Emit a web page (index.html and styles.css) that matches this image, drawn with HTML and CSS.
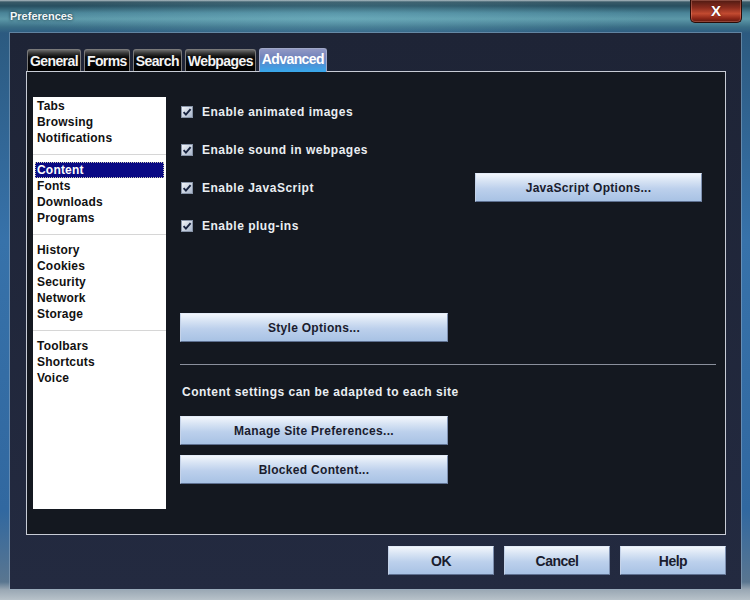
FILE: index.html
```html
<!DOCTYPE html>
<html>
<head>
<meta charset="utf-8">
<title>Preferences</title>
<link rel="stylesheet" href="styles.css">
</head>
<body>
<div class="window">
  <div class="titlebar">
    <span class="title">Preferences</span>
    <div class="close">X</div>
  </div>
  <div class="dialog">
    <div class="tabs">
      <div class="tab">General</div>
      <div class="tab">Forms</div>
      <div class="tab">Search</div>
      <div class="tab">Webpages</div>
      <div class="tab active">Advanced</div>
    </div>
    <div class="panel">
      <div class="nav">
        <div class="group">
          <div class="item">Tabs</div>
          <div class="item">Browsing</div>
          <div class="item">Notifications</div>
        </div>
        <div class="group">
          <div class="item selected">Content</div>
          <div class="item">Fonts</div>
          <div class="item">Downloads</div>
          <div class="item">Programs</div>
        </div>
        <div class="group">
          <div class="item">History</div>
          <div class="item">Cookies</div>
          <div class="item">Security</div>
          <div class="item">Network</div>
          <div class="item">Storage</div>
        </div>
        <div class="group">
          <div class="item">Toolbars</div>
          <div class="item">Shortcuts</div>
          <div class="item">Voice</div>
        </div>
      </div>
      <div class="content">
        <div class="checks">
          <label class="check"><svg class="box" width="12" height="12" viewBox="0 0 12 12"><defs><linearGradient id="cb" x1="0" y1="0" x2="1" y2="1"><stop offset="0" stop-color="#f6f8fc"/><stop offset="1" stop-color="#a4b2c8"/></linearGradient></defs><rect x="0.5" y="0.5" width="11" height="11" fill="url(#cb)" stroke="#8894a8"/><path d="M2.6 6.2 L4.9 8.6 L9.6 3.2" fill="none" stroke="#17223e" stroke-width="1.9"/></svg><span>Enable animated images</span></label>
          <label class="check"><svg class="box" width="12" height="12" viewBox="0 0 12 12"><rect x="0.5" y="0.5" width="11" height="11" fill="url(#cb)" stroke="#8894a8"/><path d="M2.6 6.2 L4.9 8.6 L9.6 3.2" fill="none" stroke="#17223e" stroke-width="1.9"/></svg><span>Enable sound in webpages</span></label>
          <div class="check-row">
            <label class="check"><svg class="box" width="12" height="12" viewBox="0 0 12 12"><rect x="0.5" y="0.5" width="11" height="11" fill="url(#cb)" stroke="#8894a8"/><path d="M2.6 6.2 L4.9 8.6 L9.6 3.2" fill="none" stroke="#17223e" stroke-width="1.9"/></svg><span>Enable JavaScript</span></label>
            <button class="btn js-btn">JavaScript Options...</button>
          </div>
          <label class="check"><svg class="box" width="12" height="12" viewBox="0 0 12 12"><rect x="0.5" y="0.5" width="11" height="11" fill="url(#cb)" stroke="#8894a8"/><path d="M2.6 6.2 L4.9 8.6 L9.6 3.2" fill="none" stroke="#17223e" stroke-width="1.9"/></svg><span>Enable plug-ins</span></label>
        </div>
        <button class="btn wide style-btn">Style Options...</button>
        <div class="rule"></div>
        <div class="note">Content settings can be adapted to each site</div>
        <button class="btn wide manage-btn">Manage Site Preferences...</button>
        <button class="btn wide blocked-btn">Blocked Content...</button>
      </div>
    </div>
    <div class="footer">
      <button class="btn dlg">OK</button>
      <button class="btn dlg">Cancel</button>
      <button class="btn dlg">Help</button>
    </div>
  </div>
</div>
</body>
</html>
```
FILE: styles.css
```css
* { box-sizing: border-box; }
html, body { margin: 0; padding: 0; }
body {
  width: 750px;
  height: 600px;
  overflow: hidden;
  font-family: "Liberation Sans", Arial, sans-serif;
  background: #2a5a88;
}
.window {
  width: 750px;
  height: 600px;
  display: flex;
  flex-direction: column;
  padding: 0 9px 11px 10px;
  background:
    radial-gradient(ellipse 320px 22px at 45% 18px, rgba(130, 200, 215, 0.35), rgba(130, 200, 215, 0) 100%),
    linear-gradient(180deg, #b4c0c6 0, #3a5a68 2px, #284f60 6px, #4a8498 13px, #5c98a8 19px, #3a6e86 27px, #2c5a80 33px, #3772aa 40%, #3168a0 85%, #5a7690 97%, #9aa8b4 98.3%, #b8c2ca 100%);
}
.titlebar {
  height: 33px;
  display: flex;
  justify-content: space-between;
  align-items: flex-start;
  flex-shrink: 0;
}
.title {
  margin-top: 9px;
  font-size: 11px;
  line-height: 14px;
  font-weight: bold;
  color: #f2f6f8;
  text-shadow: 0 0 3px rgba(0, 25, 35, 0.9);
}
.close {
  width: 52px;
  height: 23px;
  margin-right: -1px;
  border: 1px solid #2a0c08;
  border-top: none;
  border-radius: 0 0 5px 5px;
  background: linear-gradient(180deg, #4e1a12 0, #8a2c1e 35%, #c24a30 62%, #8a2416 85%, #5e1a10 100%);
  box-shadow: inset 0 0 0 1px rgba(255, 170, 150, 0.3);
  color: #fff;
  font-size: 15px;
  font-weight: bold;
  line-height: 21px;
  text-align: center;
  text-shadow: 0 0 2px rgba(60, 0, 0, 0.9);
}
.dialog {
  flex: 1;
  display: flex;
  flex-direction: column;
  padding: 14px 15px 14px 16px;
  background: linear-gradient(180deg, #1e2436 0, #232a40 100%);
  box-shadow: 0 0 0 1px rgba(160, 180, 200, 0.45);
}
.tabs {
  height: 24px;
  display: flex;
  align-items: flex-end;
  gap: 3px;
  margin-left: 1px;
  position: relative;
  z-index: 1;
  flex-shrink: 0;
}
.tab {
  height: 22px;
  padding: 0 2px;
  border: 1px solid #7a7a7a;
  border-bottom: none;
  border-radius: 3px 3px 0 0;
  background: linear-gradient(180deg, #6a6a6a 0, #3a3a3a 3px, #0c0c0c 7px, #000 100%);
  color: #f4f4f4;
  font-weight: bold;
  font-size: 14px;
  letter-spacing: -0.6px;
  line-height: 23px;
  white-space: nowrap;
}
.tab.active {
  height: 24px;
  margin-bottom: -1px;
  line-height: 20px;
  border-color: #a0a8c8;
  background: linear-gradient(180deg, #9098c4 0, #7484bc 35%, #4c94d8 70%, #38a8ec 100%);
  color: #fff;
}
.panel {
  height: 464px;
  flex-shrink: 0;
  display: flex;
  gap: 14px;
  padding: 25px 9px 25px 6px;
  border: 1px solid #c8ccd6;
  background: #141820;
}
.nav {
  width: 133px;
  flex-shrink: 0;
  background: #fff;
  padding-top: 1px;
}
.group + .group {
  margin-top: 8px;
  padding-top: 7px;
  border-top: 1px solid #d6d6d6;
}
.item {
  height: 16px;
  margin: 0 2px;
  padding-left: 2px;
  font-size: 12px;
  line-height: 16px;
  font-weight: bold;
  letter-spacing: 0.2px;
  color: #111;
}
.item.selected {
  background: #0a0a84;
  color: #fff;
  outline: 1px dotted #c8c8b0;
  outline-offset: -1px;
}
.content {
  flex: 1;
  display: flex;
  flex-direction: column;
  align-items: flex-start;
}
.checks {
  width: 100%;
  display: flex;
  flex-direction: column;
  gap: 9px;
}
.check, .check-row {
  height: 29px;
  display: flex;
  align-items: center;
}
.check-row { width: 100%; }
.check {
  gap: 9px;
  padding-left: 1px;
  color: #eaeef2;
  font-size: 12px;
  font-weight: bold;
  letter-spacing: 0.5px;
}
.box { flex-shrink: 0; }
.btn {
  height: 29px;
  padding: 0;
  border: 1px solid;
  border-color: #e4ecf8 #7e90b0 #5e7090 #c4d2e8;
  background: linear-gradient(180deg, #f2f6fc 0, #d8e4f4 25%, #bcd0ec 55%, #a8c2e4 100%);
  color: #1a1c2e;
  font-family: "Liberation Sans", Arial, sans-serif;
  font-size: 12px;
  font-weight: bold;
  letter-spacing: 0.3px;
  text-align: center;
}
.js-btn {
  width: 227px;
  margin-left: auto;
  margin-right: 14px;
}
.wide { width: 268px; }
.style-btn { margin-top: 73px; }
.rule {
  width: 100%;
  height: 1px;
  margin-top: 22px;
  background: #8a8f9c;
}
.note {
  margin-top: 19px;
  padding-left: 2px;
  font-size: 12px;
  line-height: 16px;
  font-weight: bold;
  letter-spacing: 0.5px;
  color: #eaeef2;
}
.manage-btn { margin-top: 16px; }
.blocked-btn { margin-top: 10px; }
.footer {
  margin-top: 11px;
  display: flex;
  justify-content: flex-end;
  gap: 10px;
}
.dlg {
  width: 106px;
  font-size: 14px;
  letter-spacing: -0.5px;
}
```
